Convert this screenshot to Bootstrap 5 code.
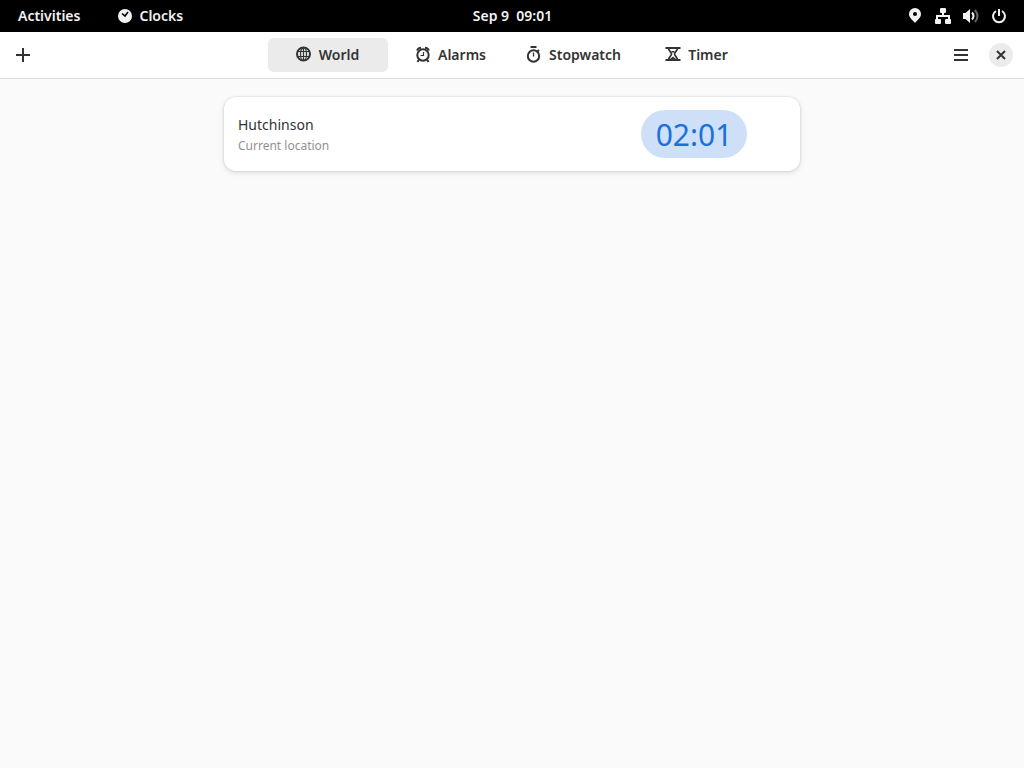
<!DOCTYPE html>
<html lang="en">
<head>
<meta charset="utf-8">
<meta name="viewport" content="width=device-width, initial-scale=1">
<title>Clocks</title>
<link href="https://cdn.jsdelivr.net/npm/bootstrap@5.3.0/dist/css/bootstrap.min.css" rel="stylesheet">
<style>
  body { background: #fafafa; color: #333; font: 14px/20px "Noto Sans", sans-serif; }
  button { color: inherit; }
  svg { display: block; flex: none; overflow: visible; }
  .thirds { display: grid; grid-template-columns: 1fr auto 1fr; align-items: center; }
  .topbar { background: #000; color: #f2f2f2; height: 32px; padding: 0 17px 0 18px; }
  .topbar button, .tab { border: 0; padding: 0; background: none; font-weight: 600; }
  .app-name { margin-left: 38px; gap: 7px; }
  .date { white-space: pre; }
  .status { gap: 12px; }
  .appbar { background: #fff; height: 47px; border-bottom: 1px solid #dedede; padding: 0 6px; }
  .tabs { gap: 3px; }
  .tab { width: 120px; height: 34px; gap: 7px; border-radius: 6px; }
  .tab.active { background: #ebebeb; }
  .tools { gap: 11px; padding-right: 5px; }
  .tool { width: 34px; height: 34px; border: 0; background: none; padding: 0; }
  .close-btn { width: 24px; height: 24px; background: #ebebeb; }
  .places { max-width: 576px; padding: 18px 0; }
  .place { min-height: 74px; border-radius: 12px; background: #fff; padding: 13px 53px 13px 14px;
    box-shadow: 0 0 0 1px rgba(0,0,0,.03), 0 1px 3px 1px rgba(0,0,0,.07), 0 2px 6px 2px rgba(0,0,0,.03); }
  .city { line-height: 22px; padding-top: 2px; }
  .sub { font-size: 12px; color: #929292; }
  .time { width: 106px; height: 48px; border-radius: 24px; background: #cde0f8; color: #1c71d8; font-size: 30px; line-height: 50px; }
</style>
</head>
<body class="min-vh-100">
<header class="topbar thirds">
  <div class="d-flex align-items-center">
    <button type="button">Activities</button>
    <button type="button" class="app-name d-flex align-items-center">
      <svg width="14" height="14" viewBox="0 0 14 14" aria-hidden="true"><circle cx="7" cy="7" r="7" fill="#f2f2f2"/><path d="M4 4.500l3 2.500L10 3" fill="none" stroke="#000" stroke-width="1.600"/></svg>
      Clocks</button>
  </div>
  <button type="button" class="date">Sep 9  09:01</button>
  <div class="status d-flex align-items-center justify-content-end">
    <svg width="16" height="16" viewBox="0 0 16 16" fill="#f2f2f2" aria-label="Location"><path fill-rule="evenodd" d="M8 0a6 6 0 0 0-6 6c0 4 4 6 6 9 2-3 6-5 6-9a6 6 0 0 0-6-6zm0 4a2 2 0 1 1 0 4 2 2 0 0 1 0-4z"/></svg>
    <svg width="16" height="16" viewBox="0 0 16 16" fill="#f2f2f2" aria-label="Network"><rect x="5" width="6" height="5" rx="1"/><rect y="11" width="6" height="5" rx="1"/><rect x="10" y="11" width="6" height="5" rx="1"/><path d="M7 4h2v3h6v5h-2V9H3v3H1V7h6z"/></svg>
    <svg width="16" height="16" viewBox="0 0 16 16" fill="none" stroke="#f2f2f2" stroke-width="2" aria-label="Volume"><path d="M0 5h2.500L7 1v14l-4.500-4H0z" fill="#f2f2f2" stroke="none"/><path d="M9 4.500q3 3.500 0 7"/><path d="M12 2q5 6 0 12" stroke="#666"/></svg>
    <svg width="16" height="16" viewBox="0 0 16 16" fill="none" stroke="#f2f2f2" stroke-width="2" aria-label="Power"><path d="M5 3a6 6 0 1 0 6 0M8 1v7"/></svg>
  </div>
</header>
<nav class="appbar thirds" aria-label="Views">
  <button type="button" class="tool d-flex align-items-center justify-content-center" aria-label="Add"><svg width="14" height="14" viewBox="0 0 14 14" fill="#333"><path d="M6 0h2v6h6v2H8v6H6V8H0V6h6z"/></svg></button>
  <div class="tabs d-flex">
    <button type="button" class="tab active d-flex align-items-center justify-content-center">
      <svg width="16" height="16" viewBox="0 0 16 16" fill="none" stroke="#333" aria-hidden="true"><circle cx="7.500" cy="7" r="6.500" stroke-width="2"/><ellipse cx="7.500" cy="7" rx="3" ry="6.500" stroke-width="1.200"/><path d="M7.500 1v13M1 4.500h13M1 9.500h13" stroke-width="1.200"/></svg>World</button>
    <button type="button" class="tab d-flex align-items-center justify-content-center">
      <svg width="16" height="16" viewBox="0 0 16 16" fill="none" stroke="#333" stroke-width="2" aria-hidden="true"><circle cx="8" cy="8" r="5.700"/><path d="M8.500 5v3.500H5.500" stroke-width="1.200"/><path d="M2 3.500Q3 1 6 .8M14 3.500Q13 1 10 .8M4 12.500l-1.500 2.500M12 12.500l1.500 2.500"/></svg>Alarms</button>
    <button type="button" class="tab d-flex align-items-center justify-content-center">
      <svg width="16" height="16" viewBox="0 0 16 16" fill="none" stroke="#333" stroke-width="2" aria-hidden="true"><circle cx="7.500" cy="9" r="5.700"/><path d="M4.500 0h6M11.500 4.500L13 3"/><path d="M7.500 5.500v4" stroke-width="1.300"/></svg>Stopwatch</button>
    <button type="button" class="tab d-flex align-items-center justify-content-center">
      <svg width="16" height="16" viewBox="0 0 16 16" fill="none" stroke="#333" aria-hidden="true"><path d="M.5 1h15M.5 13h15" stroke-width="2"/><path d="M3.500 1c0 3 3 4 3 6s-3 3-3 6M12.500 1c0 3-3 4-3 6s3 3 3 6" stroke-width="1.700"/><path d="M6 4h4L8 6zM5 12L8 9.500l3 2.500z" fill="#333" stroke="none"/></svg>Timer</button>
  </div>
  <div class="tools d-flex align-items-center justify-content-end">
    <button type="button" class="tool d-flex align-items-center justify-content-center" aria-label="Menu"><svg width="14" height="12" viewBox="0 0 14 12" fill="#333"><path d="M0 0h14v2H0zM0 5h14v2H0zM0 10h14v2H0z"/></svg></button>
    <button type="button" class="tool close-btn rounded-circle d-flex align-items-center justify-content-center" aria-label="Close"><svg width="8" height="8" viewBox="0 0 8 8" stroke="#333" stroke-width="2"><path d="M0 0l8 8M8 0L0 8"/></svg></button>
  </div>
</nav>
<main class="places mx-auto">
  <section class="place d-flex align-items-center justify-content-between">
    <div><div class="city">Hutchinson</div><div class="sub">Current location</div></div>
    <time class="time text-center" datetime="02:01">02:01</time>
  </section>
</main>
<script src="https://cdn.jsdelivr.net/npm/bootstrap@5.3.0/dist/js/bootstrap.bundle.min.js"></script>
</body>
</html>
